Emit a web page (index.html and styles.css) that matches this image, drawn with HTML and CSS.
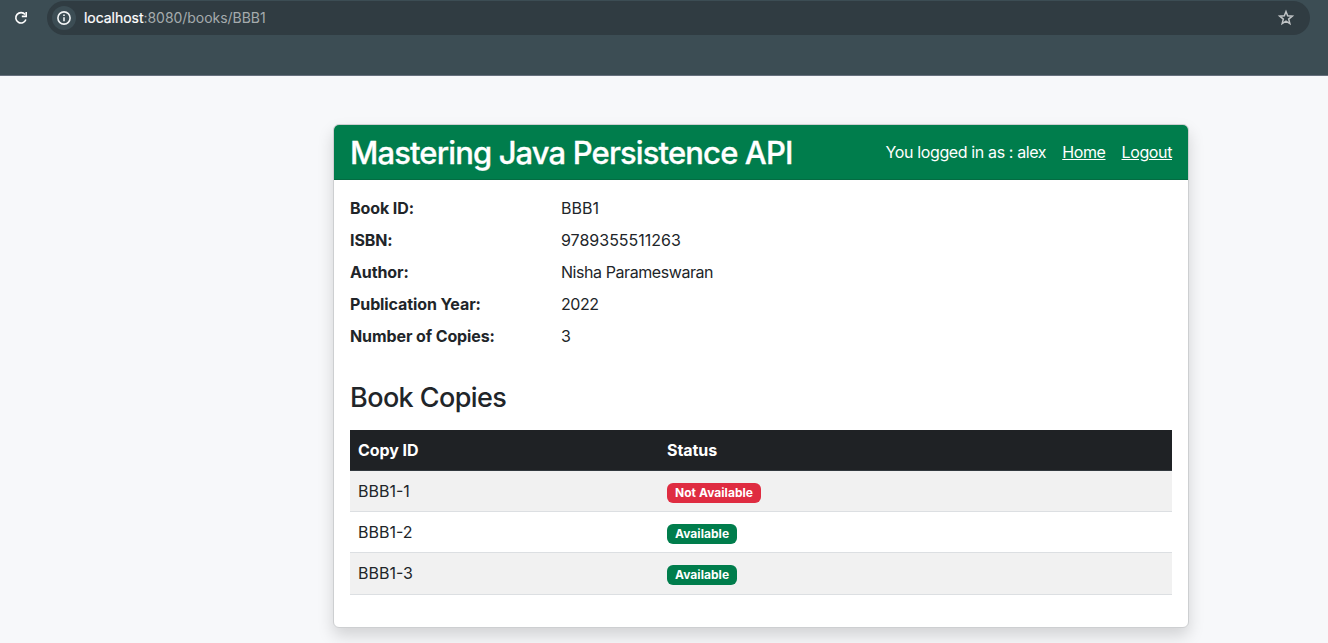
FILE: index.html
```html
<!DOCTYPE html>
<html lang="en">
<head>
  <meta charset="utf-8">
  <title>Mastering Java Persistence API</title>
  <link rel="stylesheet" href="styles.css">
</head>
<body>
  <header class="browser">
    <div class="toolbar">
      <svg class="reload" width="16" height="16" viewBox="0 0 16 16" fill="none" stroke="#fff" stroke-width="1.6">
        <path d="M12.1 4.6A5.2 5.2 0 1 0 12.9 9.6"/>
        <path d="M13.2 2v4.4H8.8"/>
      </svg>
      <div class="address">
        <span class="info">
          <svg width="14" height="14" viewBox="0 0 14 14" fill="none" stroke="#f1f4f5" stroke-width="1.6">
            <circle cx="7" cy="7" r="6.1"/>
            <path d="M7 6.3v4M7 3.6v1.5"/>
          </svg>
        </span>
        <span class="url"><span class="host">localhost</span>:8080/books/BBB1</span>
        <svg class="star" width="18" height="18" viewBox="0 0 18 18" fill="none" stroke="#c0c4c6" stroke-width="1.5">
          <path d="M9 2.6l1.65 4.25 4.65.3-3.6 2.95 1.15 4.5L9 12.1l-3.85 2.5 1.15-4.5-3.6-2.95 4.65-.3z"/>
        </svg>
      </div>
    </div>
  </header>

  <main class="page">
    <section class="card">
      <div class="card-header">
        <h1 class="title">Mastering Java Persistence API</h1>
        <nav class="session">
          <span>You logged in as : alex</span>
          <a href="#">Home</a>
          <a href="#">Logout</a>
        </nav>
      </div>
      <div class="card-body">
        <dl class="details">
          <dt>Book ID:</dt><dd class="code">BBB1</dd>
          <dt>ISBN:</dt><dd class="code">9789355511263</dd>
          <dt>Author:</dt><dd>Nisha Parameswaran</dd>
          <dt>Publication Year:</dt><dd>2022</dd>
          <dt>Number of Copies:</dt><dd>3</dd>
        </dl>
        <h2 class="subtitle">Book Copies</h2>
        <table class="copies">
          <thead>
            <tr><th class="col-id">Copy ID</th><th>Status</th></tr>
          </thead>
          <tbody>
            <tr><td class="code">BBB1-1</td><td><span class="badge badge-danger">Not Available</span></td></tr>
            <tr><td class="code">BBB1-2</td><td><span class="badge badge-success">Available</span></td></tr>
            <tr><td class="code">BBB1-3</td><td><span class="badge badge-success">Available</span></td></tr>
          </tbody>
        </table>
      </div>
    </section>
  </main>
</body>
</html>
```
FILE: styles.css
```css
* {
  box-sizing: border-box;
}

body {
  margin: 0;
  height: 643px;
  overflow: hidden;
  background: #f7f8fa;
  color: #212529;
  font: 400 16px/24px Inter, "Liberation Sans", sans-serif;
  letter-spacing: -0.43px;
}

.browser {
  height: 76px;
  background: #3c4d54;
  border-bottom: 1px solid #66707d;
}

.toolbar {
  display: flex;
  align-items: center;
  gap: 18px;
  padding: 1px 18px 0 13px;
}

.reload {
  flex: none;
}

.address {
  display: flex;
  align-items: center;
  flex: 1;
  height: 34px;
  padding: 0 15px 0 5px;
  border-radius: 17px;
  background: #303c42;
}

.info {
  display: grid;
  place-items: center;
  width: 24px;
  height: 24px;
  border-radius: 50%;
  background: #3c4d54;
}

.url {
  flex: 1;
  margin-left: 8px;
  color: #a5abad;
  font-size: 14px;
  letter-spacing: -0.04px;
}

.host {
  color: #fff;
  -webkit-text-stroke: 0.2px #fff;
}

.page {
  padding: 48px 139px 0 333px;
}

.card {
  border: 1px solid #cdcfd1;
  border-radius: 6px;
  background: #fff;
  box-shadow: 0 8px 16px rgba(0, 0, 0, 0.15);
}

.card-header {
  display: flex;
  align-items: center;
  justify-content: space-between;
  height: 55px;
  padding: 0 16px;
  border-bottom: 1px solid #046b42;
  border-radius: 5px 5px 0 0;
  background: #007d4c;
  color: #fff;
}

.title {
  margin: 0;
  padding-top: 2px;
  font-size: 31px;
  font-weight: 500;
  line-height: 38px;
  letter-spacing: -0.87px;
  -webkit-text-stroke: 0.3px #fff;
}

.session {
  display: flex;
  gap: 16px;
  letter-spacing: -0.38px;
}

.session a {
  color: inherit;
}

.card-body {
  padding: 16px 16px 32px;
}

.details {
  display: grid;
  grid-template-columns: 211px 1fr;
  row-gap: 8px;
  margin: 0 0 33px;
}

.details dt {
  font-weight: 700;
  letter-spacing: -0.1px;
}

.details dd {
  margin: 0;
}

.details .code,
.copies .code {
  letter-spacing: 0;
}

.subtitle {
  margin: 0 0 15px;
  font-size: 27px;
  font-weight: 500;
  line-height: 34px;
  letter-spacing: -0.58px;
}

.copies {
  width: 100%;
  border-collapse: separate;
  border-spacing: 0;
  table-layout: fixed;
}

.copies th,
.copies td {
  height: 41px;
  padding: 8px;
  border-bottom: 1px solid #dcdfe2;
  text-align: left;
  vertical-align: top;
}

.copies tbody tr:last-child td {
  height: 42px;
}

.copies th {
  border-color: #32383e;
  background: #1f2225;
  color: #fff;
  font-weight: 700;
  letter-spacing: -0.05px;
}

.copies .col-id {
  width: 309px;
}

.copies tbody tr:nth-child(odd) {
  background: #f1f1f1;
}

.badge {
  display: inline-block;
  padding: 4px 8px;
  border-radius: 6px;
  color: #fff;
  font-size: 12px;
  font-weight: 700;
  line-height: 12px;
  letter-spacing: 0.05px;
  vertical-align: baseline;
}

.badge-danger {
  background: #df2c41;
}

.badge-success {
  background: #007d4c;
}
```
